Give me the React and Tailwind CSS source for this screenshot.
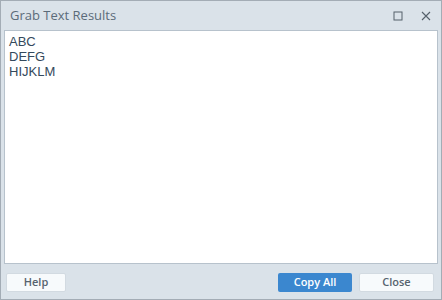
export default function App() {
  return (
    <div className="w-[442px] h-[300px] bg-[#dae2e9] border border-[#a3acb5] flex flex-col" style={{ fontFamily: '"Open Sans", "Liberation Sans", sans-serif' }}>
      <div className="h-[29px] flex items-center pl-[9px] pr-[10px] shrink-0">
        <div className="text-[13px] text-[#5b6b79] flex-1">Grab Text Results</div>
        <svg width="10" height="10" viewBox="0 0 10 10" className="mr-[18px]">
          <rect x="1" y="1" width="8" height="8" fill="none" stroke="#55606b" strokeWidth="1" />
        </svg>
        <svg width="10" height="10" viewBox="0 0 10 10">
          <path d="M1 1 L9 9 M9 1 L1 9" stroke="#55606b" strokeWidth="1.1" />
        </svg>
      </div>
      <div className="flex-1 mx-[3px] bg-white border border-[#b7c2cc] px-[4px] pt-[3px] text-[13px] leading-[15px] text-[#34495c]" style={{ fontFamily: '"Liberation Sans", Arial, sans-serif' }}>
        <div>ABC</div>
        <div>DEFG</div>
        <div>HIJKLM</div>
      </div>
      <div className="h-[35px] shrink-0 flex items-center pl-[5px] pr-[7px] pt-[2px] gap-[6px] text-[11px] font-semibold" style={{ fontFamily: '"Open Sans", "Liberation Sans", sans-serif' }}>
        <button className="w-[60px] h-[19px] bg-[#f7fafc] rounded-[2px] text-[#56636f] border border-[#d2dae1]">Help</button>
        <div className="flex-1" />
        <button className="w-[74px] h-[19px] bg-[#3b87cf] rounded-[2px] text-white">Copy All</button>
        <button className="w-[75px] h-[19px] bg-[#f7fafc] rounded-[2px] text-[#56636f] border border-[#d2dae1] ml-[1px]">Close</button>
      </div>
    </div>
  );
}
